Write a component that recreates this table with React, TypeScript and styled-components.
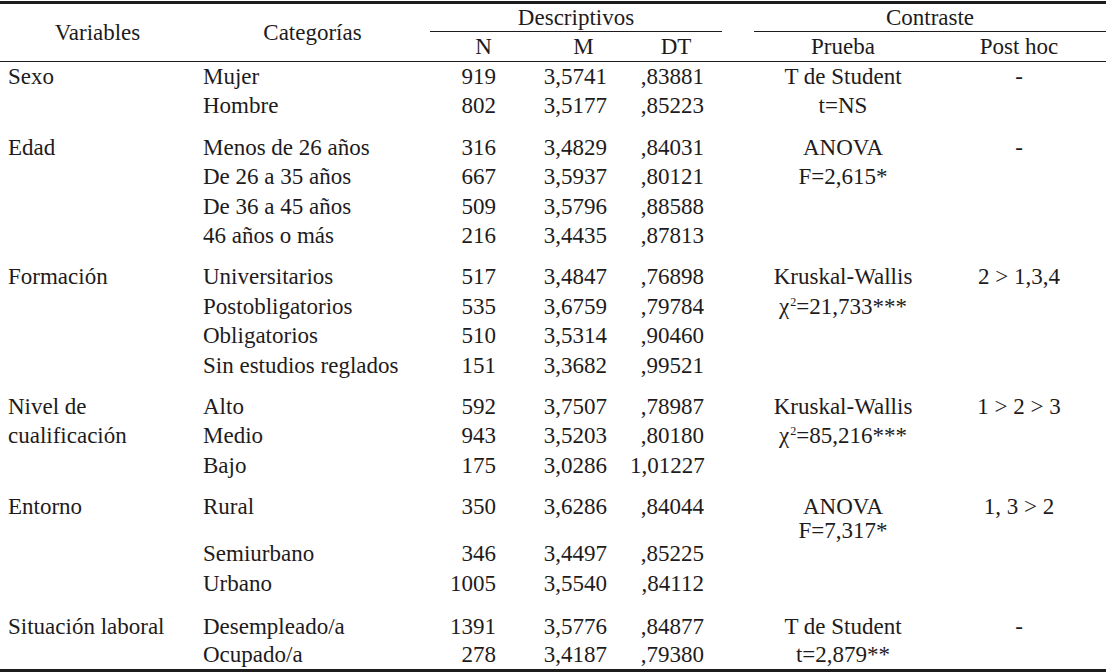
import React from "react";
import styled, { createGlobalStyle } from "styled-components";

const GlobalStyle = createGlobalStyle`
  html, body { margin: 0; padding: 0; background: #ffffff; }
  body {
    font-family: "Liberation Serif", "Times New Roman", serif;
    color: #1e1b1c;
    width: 1110px;
    height: 672px;
    overflow: hidden;
  }
`;

const COLS = "195px 235px 107px 93px 92px 32px 178px 174px";
const PITCH = 29.4;
const INK = "#1e1b1c";

const Table = styled.div`
  margin-top: 1px;
  width: 1106px;
  border-top: 3px solid ${INK};
  border-bottom: 3px solid ${INK};
  font-size: 23px;
`;

const Header = styled.div`
  display: grid;
  grid-template-columns: ${COLS};
  grid-template-rows: 28px 29px;
  border-bottom: 1px solid ${INK};
`;

const HeadCell = styled.div<{ $col: string; $row: string }>`
  grid-column: ${(p) => p.$col};
  grid-row: ${(p) => p.$row};
  display: flex;
  align-items: center;
  justify-content: center;
  line-height: 27px;
  white-space: nowrap;
`;

const GroupHead = styled(HeadCell)`
  border-bottom: 1px solid ${INK};
  box-sizing: border-box;
`;

const Group = styled.div<{ $pad: number }>`
  display: grid;
  grid-template-columns: ${COLS};
  padding-bottom: ${(p) => p.$pad}px;
`;

const Stack = styled.div<{ $align: "left" | "right" | "center"; $padL?: number; $padR?: number; $col: number }>`
  grid-column: ${(p) => p.$col};
  display: flex;
  flex-direction: column;
  text-align: ${(p) => p.$align};
  padding-left: ${(p) => p.$padL ?? 0}px;
  padding-right: ${(p) => p.$padR ?? 0}px;
  white-space: nowrap;
`;

const Line = styled.div<{ $pitch: number; $after?: number }>`
  line-height: ${(p) => p.$pitch}px;
  height: ${(p) => p.$pitch}px;
  margin-bottom: ${(p) => p.$after ?? 0}px;
`;

const PruebaStack = styled(Stack)<{ $pitchP: number }>`
  padding-top: ${(p) => (PITCH - p.$pitchP) / 2}px;
`;

const Sup = styled.span`
  font-size: 12px;
  position: relative;
  top: -8px;
  line-height: 0;
  margin-left: 1px;
`;

type Row = [string, string, string, string];
type GroupData = {
  variable: string[];
  rows: Row[];
  prueba: React.ReactNode[];
  post: string;
  pad: number;
  pitch?: number;
  pruebaPitch?: number;
  gapAfterFirst?: number;
};

const groups: GroupData[] = [
  {
    variable: ["Sexo"],
    rows: [
      ["Mujer", "919", "3,5741", ",83881"],
      ["Hombre", "802", "3,5177", ",85223"],
    ],
    prueba: ["T de Student", "t=NS"],
    post: "-",
    pad: 12,
  },
  {
    variable: ["Edad"],
    rows: [
      ["Menos de 26 años", "316", "3,4829", ",84031"],
      ["De 26 a 35 años", "667", "3,5937", ",80121"],
      ["De 36 a 45 años", "509", "3,5796", ",88588"],
      ["46 años o más", "216", "3,4435", ",87813"],
    ],
    prueba: ["ANOVA", "F=2,615*"],
    post: "-",
    pad: 12,
  },
  {
    variable: ["Formación"],
    rows: [
      ["Universitarios", "517", "3,4847", ",76898"],
      ["Postobligatorios", "535", "3,6759", ",79784"],
      ["Obligatorios", "510", "3,5314", ",90460"],
      ["Sin estudios reglados", "151", "3,3682", ",99521"],
    ],
    prueba: [
      "Kruskal-Wallis",
      <>
        χ<Sup>2</Sup>=21,733***
      </>,
    ],
    post: "2 > 1,3,4",
    pad: 12,
  },
  {
    variable: ["Nivel de", "cualificación"],
    rows: [
      ["Alto", "592", "3,7507", ",78987"],
      ["Medio", "943", "3,5203", ",80180"],
      ["Bajo", "175", "3,0286", "1,01227"],
    ],
    prueba: [
      "Kruskal-Wallis",
      <>
        χ<Sup>2</Sup>=85,216***
      </>,
    ],
    post: "1 > 2 > 3",
    pad: 12,
  },
  {
    variable: ["Entorno"],
    rows: [
      ["Rural", "350", "3,6286", ",84044"],
      ["Semiurbano", "346", "3,4497", ",85225"],
      ["Urbano", "1005", "3,5540", ",84112"],
    ],
    prueba: ["ANOVA", "F=7,317*"],
    post: "1, 3 > 2",
    pad: 14.5,
    pruebaPitch: 24,
    gapAfterFirst: 18,
  },
  {
    variable: ["Situación laboral"],
    rows: [
      ["Desempleado/a", "1391", "3,5776", ",84877"],
      ["Ocupado/a", "278", "3,4187", ",79380"],
    ],
    prueba: ["T de Student", "t=2,879**"],
    post: "-",
    pad: 0,
    pitch: 28,
  },
];

function DataGroup({ g }: { g: GroupData }) {
  const pitch = g.pitch ?? PITCH;
  const pPitch = g.pruebaPitch ?? pitch;
  const col = (i: number) =>
    g.rows.map((r, k) => (
      <Line key={k} $pitch={pitch} $after={k === 0 ? g.gapAfterFirst : 0}>
        {r[i]}
      </Line>
    ));
  return (
    <Group $pad={g.pad}>
      <Stack $col={1} $align="left" $padL={8}>
        {g.variable.map((v, k) => (
          <Line key={k} $pitch={pitch}>
            {v}
          </Line>
        ))}
      </Stack>
      <Stack $col={2} $align="left" $padL={8}>
        {col(0)}
      </Stack>
      <Stack $col={3} $align="right" $padR={41}>
        {col(1)}
      </Stack>
      <Stack $col={4} $align="right" $padR={23}>
        {col(2)}
      </Stack>
      <Stack $col={5} $align="right" $padR={18}>
        {col(3)}
      </Stack>
      <PruebaStack $col={7} $align="center" $pitchP={pPitch}>
        {g.prueba.map((p, k) => (
          <Line key={k} $pitch={pPitch}>
            {p}
          </Line>
        ))}
      </PruebaStack>
      <Stack $col={8} $align="center">
        <Line $pitch={pitch}>{g.post}</Line>
      </Stack>
    </Group>
  );
}

export default function App() {
  return (
    <>
      <GlobalStyle />
      <Table>
        <Header>
          <HeadCell $col="1" $row="1 / 3">Variables</HeadCell>
          <HeadCell $col="2" $row="1 / 3">Categorías</HeadCell>
          <GroupHead $col="3 / 6" $row="1">Descriptivos</GroupHead>
          <GroupHead $col="7 / 9" $row="1">Contraste</GroupHead>
          <HeadCell $col="3" $row="2">N</HeadCell>
          <HeadCell $col="4" $row="2">M</HeadCell>
          <HeadCell $col="5" $row="2">DT</HeadCell>
          <HeadCell $col="7" $row="2">Prueba</HeadCell>
          <HeadCell $col="8" $row="2">Post hoc</HeadCell>
        </Header>
        {groups.map((g, i) => (
          <DataGroup key={i} g={g} />
        ))}
      </Table>
    </>
  );
}
